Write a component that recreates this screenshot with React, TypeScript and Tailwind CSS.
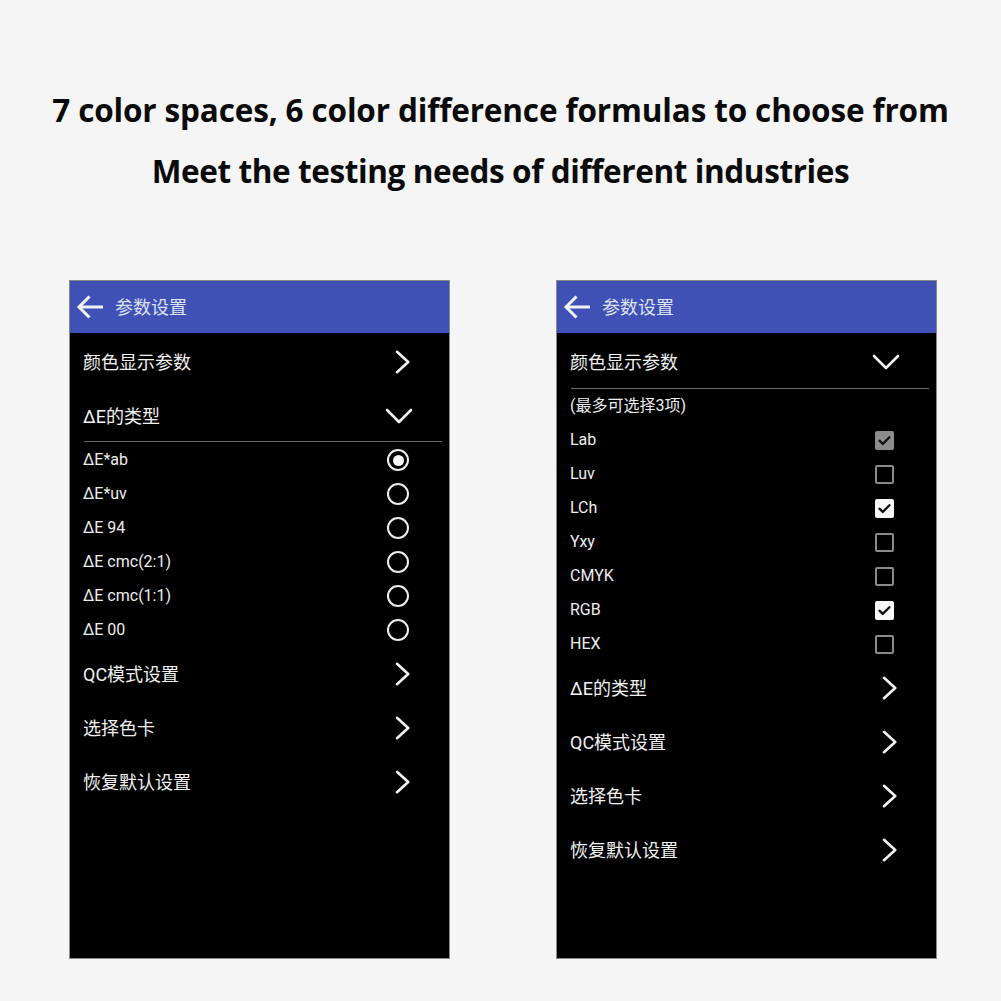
import React from 'react';

const cjk = { fontFamily: 'Roboto, "Noto Sans CJK SC", sans-serif' };

const ChevronRight = () => (
  <svg width="16" height="24" viewBox="0 0 16 24" fill="none" stroke="#f2f2f2" strokeWidth="2.6" strokeLinecap="round" strokeLinejoin="round">
    <path d="M3 1.8l11.2 10.2-11.2 10.2" />
  </svg>
);

const ChevronDown = () => (
  <svg width="28" height="16" viewBox="0 0 28 16" fill="none" stroke="#f2f2f2" strokeWidth="2.6" strokeLinecap="round" strokeLinejoin="round">
    <path d="M2 2l12 12 12-12" />
  </svg>
);

const BackArrow = () => (
  <svg width="28" height="28" viewBox="0 0 28 28" fill="none" stroke="#f2f2f2" strokeWidth="3" strokeLinecap="butt" strokeLinejoin="miter">
    <path d="M27 14H3.5" />
    <path d="M13.5 3.5L3 14l10.5 10.5" />
  </svg>
);

const Radio = ({ on }: { on?: boolean }) => (
  <div className="w-[22px] h-[22px] rounded-full border-2 border-[#eeeeee] flex items-center justify-center">
    {on && <div className="w-[11px] h-[11px] rounded-full bg-[#f5f5f5]" />}
  </div>
);

const Check = ({ state }: { state: 'off' | 'on' | 'dim' }) => {
  if (state === 'off') {
    return <div className="w-[19px] h-[19px] rounded-[2px] border-2 border-[#8a8a8a]" />;
  }
  return (
    <div
      className={
        'w-[19px] h-[19px] rounded-[2px] flex items-center justify-center ' +
        (state === 'on' ? 'bg-[#f8f8f8]' : 'bg-[#8c8c8c]')
      }
    >
      <svg width="15" height="15" viewBox="0 0 14 14" fill="none" stroke="#111" strokeWidth="2.2" strokeLinecap="round" strokeLinejoin="round">
        <path d="M2.3 7.2l3.1 3 6.2-6.2" />
      </svg>
    </div>
  );
};

const Header = () => (
  <div className="h-[52px] bg-[#3f51b5] flex items-center pl-[6px]">
    <BackArrow />
    <span className="ml-[11px] text-[18px] text-[#dfe2f0]" style={cjk}>
      参数设置
    </span>
  </div>
);

const MainRow = ({ label, icon }: { label: string; icon: React.ReactNode }) => (
  <div className="h-[54px] flex items-center justify-between pl-[13px] pr-[39px]">
    <span className="text-[18px] text-[#f0f0f0]" style={cjk}>
      {label}
    </span>
    <div className="w-[28px] flex justify-end">{icon}</div>
  </div>
);

const SubRow = ({ label, children, pr }: { label: string; children?: React.ReactNode; pr: string }) => (
  <div className={'h-[34px] flex items-center justify-between pl-[13px] ' + pr}>
    <span className="text-[16px] text-[#eeeeee]" style={cjk}>
      {label}
    </span>
    <div className="flex justify-end">{children}</div>
  </div>
);

const Phone = ({ children }: { children: React.ReactNode }) => (
  <div className="w-[381px] h-[679px] border border-[#8a8a8a] bg-black flex flex-col">
    <Header />
    <div className="pt-[2px] flex flex-col">{children}</div>
  </div>
);

const radios = ['ΔE*ab', 'ΔE*uv', 'ΔE 94', 'ΔE cmc(2:1)', 'ΔE cmc(1:1)', 'ΔE 00'];

const checks: { label: string; state: 'off' | 'on' | 'dim' }[] = [
  { label: 'Lab', state: 'dim' },
  { label: 'Luv', state: 'off' },
  { label: 'LCh', state: 'on' },
  { label: 'Yxy', state: 'off' },
  { label: 'CMYK', state: 'off' },
  { label: 'RGB', state: 'on' },
  { label: 'HEX', state: 'off' },
];

export default function App() {
  return (
    <div className="w-[1001px] h-[1001px] bg-[#f5f5f5] flex flex-col items-center overflow-hidden">
      <div
        className="flex flex-col items-center text-[#0a0a0a] font-bold"
        style={{ fontFamily: '"Open Sans", sans-serif' }}
      >
        <div className="mt-[88px] text-[31.5px] leading-[44px] tracking-[-0.15px]">
          7 color spaces, 6 color difference formulas to choose from
        </div>
        <div className="mt-[17px] text-[31.5px] leading-[44px] tracking-[-0.4px]">
          Meet the testing needs of different industries
        </div>
      </div>

      <div className="mt-[87px] flex gap-[106px] pl-[5px]">
        <Phone>
          <MainRow label="颜色显示参数" icon={<ChevronRight />} />
          <MainRow label="ΔE的类型" icon={<div className="-mr-[3px]"><ChevronDown /></div>} />
          <div className="ml-[14px] mr-[7px] h-px bg-[#6a6a6a] -mt-[2px] mb-[1px]" />
          {radios.map((r, i) => (
            <SubRow key={r} label={r} pr="pr-[40px]">
              <Radio on={i === 0} />
            </SubRow>
          ))}
          <MainRow label="QC模式设置" icon={<ChevronRight />} />
          <MainRow label="选择色卡" icon={<ChevronRight />} />
          <MainRow label="恢复默认设置" icon={<ChevronRight />} />
        </Phone>

        <Phone>
          <MainRow label="颜色显示参数" icon={<div className="-mr-[3px]"><ChevronDown /></div>} />
          <div className="ml-[14px] mr-[7px] h-px bg-[#6a6a6a] -mt-[1px]" />
          <SubRow label="(最多可选择3项)" pr="pr-[42px]" />
          {checks.map((c) => (
            <SubRow key={c.label} label={c.label} pr="pr-[42px]">
              <Check state={c.state} />
            </SubRow>
          ))}
          <MainRow label="ΔE的类型" icon={<ChevronRight />} />
          <MainRow label="QC模式设置" icon={<ChevronRight />} />
          <MainRow label="选择色卡" icon={<ChevronRight />} />
          <MainRow label="恢复默认设置" icon={<ChevronRight />} />
        </Phone>
      </div>
    </div>
  );
}
